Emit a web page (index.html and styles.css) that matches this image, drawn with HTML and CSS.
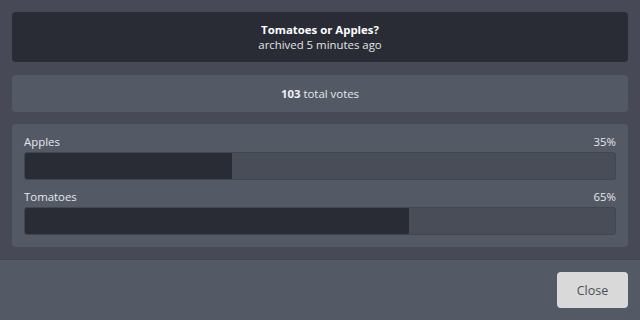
FILE: index.html
```html
<!DOCTYPE html>
<html>
<head>
<meta charset="utf-8">
<link rel="stylesheet" href="styles.css">
</head>
<body>
<div class="dialog">
  <div class="content">
    <div class="card header">
      <div class="title">Tomatoes or Apples?</div>
      <div class="sub">archived 5 minutes ago</div>
    </div>
    <div class="card total"><b>103</b> total votes</div>
    <div class="card results">
      <div class="option">
        <div class="row"><span>Apples</span><span>35%</span></div>
        <div class="track"><div class="fill" style="width:35%"></div></div>
      </div>
      <div class="option">
        <div class="row"><span>Tomatoes</span><span>65%</span></div>
        <div class="track"><div class="fill" style="width:65%"></div></div>
      </div>
    </div>
  </div>
  <div class="footer">
    <button class="close">Close</button>
  </div>
</div>
</body>
</html>
```
FILE: styles.css
```css
html, body {
  margin: 0;
  height: 100%;
}
body {
  background: #474a56;
  font-family: "Open Sans", "Noto Sans", sans-serif;
  font-size: 11.4px;
  color: #e6e7ea;
}
.dialog {
  display: flex;
  flex-direction: column;
  height: 100%;
}
.content {
  display: flex;
  flex-direction: column;
  gap: 12px;
  padding: 12px;
}
.card {
  border-radius: 4px;
  background: #545966;
}
.header {
  background: #292c34;
  text-align: center;
  padding: 10px 0;
  line-height: 15px;
  margin-bottom: 1px;
}
.title {
  font-weight: bold;
  color: #ffffff;
}
.sub {
  color: #e2e3e6;
}
.total {
  text-align: center;
  padding: 10px 0;
  line-height: 17px;
  color: #e6e7ea;
}
.total b {
  color: #f2f2f4;
}
.results {
  padding: 12px;
  display: flex;
  flex-direction: column;
  gap: 11px;
}
.row {
  display: flex;
  justify-content: space-between;
  line-height: 12px;
  padding-bottom: 4px;
}
.track {
  height: 26px;
  border: 1px solid #42464f;
  border-radius: 3px;
  background: #494d58;
  overflow: hidden;
}
.fill {
  height: 100%;
  background: #292c34;
}
.footer {
  flex: 1;
  border-top: 1px solid #42454f;
  background: #545966;
  padding: 12px;
  display: flex;
  justify-content: flex-end;
  align-items: flex-start;
}
.close {
  width: 71px;
  height: 36px;
  border: none;
  border-radius: 4px;
  background: #d9d9d9;
  color: #4b4f5a;
  font-family: "Open Sans", "Noto Sans", sans-serif;
  font-size: 12.5px;
  padding: 0;
}
```
